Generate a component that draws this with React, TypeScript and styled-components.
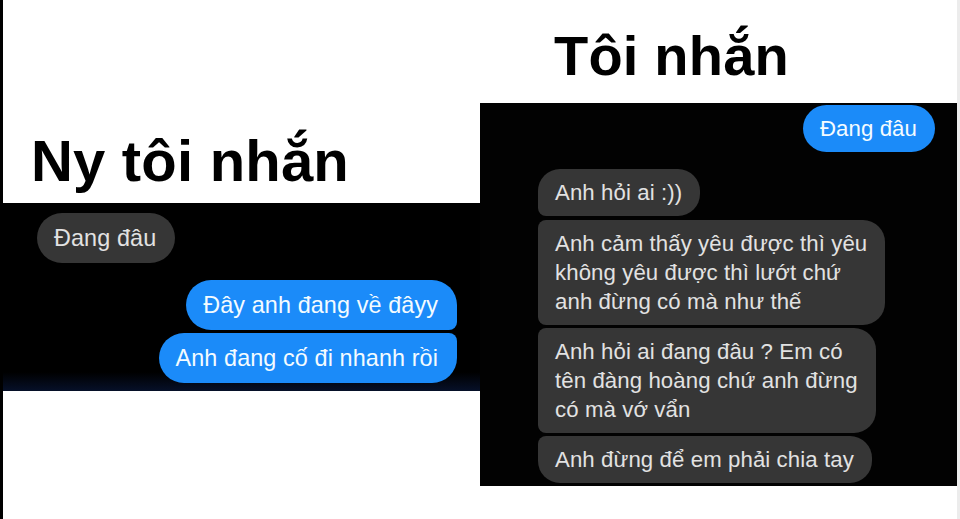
import React from "react";
import styled, { createGlobalStyle } from "styled-components";

const Global = createGlobalStyle`
  html, body { margin: 0; padding: 0; background: #fff; }
  body {
    width: 960px;
    height: 519px;
    overflow: hidden;
    font-family: "Liberation Sans", Arial, "Noto Sans", sans-serif;
  }
`;

const Page = styled.div`
  width: 960px;
  height: 519px;
  box-sizing: border-box;
  border-left: 3px solid #000;
  border-right: 3px solid #ececec;
  display: grid;
  grid-template-columns: 477px 477px;
  background: #fff;
`;

const Column = styled.div<{ $top: number; $indent: number; $gap: number }>`
  display: flex;
  flex-direction: column;
  padding-top: ${(p) => p.$top}px;
  & > h1 {
    padding-left: ${(p) => p.$indent}px;
    margin-bottom: ${(p) => p.$gap}px;
  }
`;

const Heading = styled.h1<{ $size: number }>`
  margin: 0;
  font-family: "Liberation Sans", Arial, sans-serif;
  font-weight: 700;
  font-size: ${(p) => p.$size}px;
  line-height: 56px;
  color: #000;
  letter-spacing: 0.2px;
`;

const Panel = styled.div<{
  $height: number;
  $pad: string;
  $font: number;
  $glow?: boolean;
}>`
  height: ${(p) => p.$height}px;
  box-sizing: border-box;
  padding: ${(p) => p.$pad};
  display: flex;
  flex-direction: column;
  font-size: ${(p) => p.$font}px;
  background: ${(p) =>
    p.$glow
      ? "linear-gradient(180deg, #000 0%, #000 90%, #061029 100%)"
      : "#020202"};
`;

const Bubble = styled.div<{
  $blue?: boolean;
  $right?: boolean;
  $lg?: boolean;
  $mt?: number;
  $radius?: string;
}>`
  align-self: ${(p) => (p.$right ? "flex-end" : "flex-start")};
  margin-top: ${(p) => p.$mt ?? 0}px;
  padding: ${(p) => (p.$lg ? "10px 19px 10px 17px" : "9px 18px 9px 17px")};
  line-height: ${(p) => (p.$lg ? 30 : 29)}px;
  color: ${(p) => (p.$blue ? "#f4fbff" : "#e2e2e2")};
  background: ${(p) => (p.$blue ? "#1b8bf9" : "#363636")};
  border-radius: ${(p) => p.$radius ?? "22px"};
  white-space: nowrap;
  letter-spacing: 0.1px;
`;

const Line = styled.span`
  display: block;
`;

const Lines = ({ text }: { text: string[] }) => (
  <>
    {text.map((t, i) => (
      <Line key={i}>{t}</Line>
    ))}
  </>
);

export default function App() {
  return (
    <>
      <Global />
      <Page>
        <Column $top={133} $indent={28} $gap={14}>
          <Heading $size={58}>Ny tôi nhắn</Heading>
          <Panel $height={188} $pad="10px 23px 8px 34px" $font={23.4} $glow>
            <Bubble $lg $radius="25px">Đang đâu</Bubble>
            <Bubble $lg $blue $right $mt={17} $radius="25px 25px 8px 25px">
              Đây anh đang về đâyy
            </Bubble>
            <Bubble $lg $blue $right $mt={3} $radius="25px 8px 25px 25px">
              Anh đang cố đi nhanh rồi
            </Bubble>
          </Panel>
        </Column>
        <Column $top={28} $indent={74} $gap={19}>
          <Heading $size={56}>Tôi nhắn</Heading>
          <Panel $height={383} $pad="2px 22px 1px 58px" $font={22.2}>
            <Bubble $blue $right $radius="24px">Đang đâu</Bubble>
            <Bubble $mt={17} $radius="22px 22px 22px 8px">
              Anh hỏi ai :))
            </Bubble>
            <Bubble $mt={4} $radius="8px 22px 22px 8px">
              <Lines
                text={[
                  "Anh cảm thấy yêu được thì yêu",
                  "không yêu được thì lướt chứ",
                  "anh đừng có mà như thế",
                ]}
              />
            </Bubble>
            <Bubble $mt={3} $radius="8px 22px 22px 8px">
              <Lines
                text={[
                  "Anh hỏi ai đang đâu ? Em có",
                  "tên đàng hoàng chứ anh đừng",
                  "có mà vớ vẩn",
                ]}
              />
            </Bubble>
            <Bubble $mt={3} $radius="8px 22px 22px 22px">
              Anh đừng để em phải chia tay
            </Bubble>
          </Panel>
        </Column>
      </Page>
    </>
  );
}
